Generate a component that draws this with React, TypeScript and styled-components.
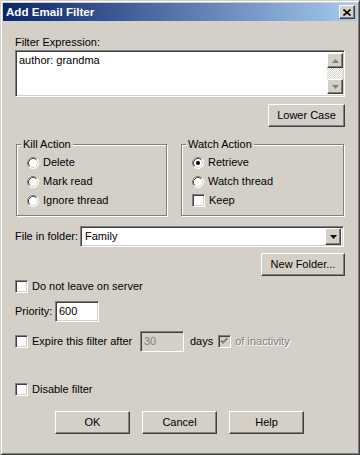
import React from 'react';
import styled, { createGlobalStyle } from 'styled-components';

const Global = createGlobalStyle`
  html, body { margin: 0; padding: 0; background: #D4D0C8; }
  body { font-family: "Liberation Sans", Arial, sans-serif; font-size: 11px; color: #000; }
  * { box-sizing: border-box; }
`;

const Window = styled.div`
  width: 360px;
  height: 455px;
  background: #D4D0C8;
  border: 1px solid;
  border-color: #D4D0C8 #404040 #404040 #D4D0C8;
  box-shadow: inset 1px 1px #fff, inset -1px -1px #808080;
  padding: 2px;
  display: flex;
  flex-direction: column;
`;

const TitleBar = styled.div`
  height: 18px;
  flex: none;
  display: flex;
  align-items: center;
  justify-content: space-between;
  padding: 0 2px 0 3px;
  background: linear-gradient(to right, #0A246A, #A6CAF0);
`;

const TitleText = styled.span`
  color: #fff;
  font-weight: bold;
  font-size: 11.6px;
  line-height: 18px;
`;

const Raised = styled.div`
  background: #D4D0C8;
  border: 1px solid;
  border-color: #fff #404040 #404040 #fff;
  box-shadow: inset -1px -1px #808080;
  display: flex;
  align-items: center;
  justify-content: center;
`;

const CloseButton = styled(Raised)`
  width: 16px;
  height: 14px;
  padding-right: 1px;
`;

const Body = styled.div`
  flex: 1;
  display: flex;
  flex-direction: column;
  padding: 15px 12px 0 12px;
`;

const Label = styled.div`
  line-height: 13px;
  height: 13px;
  white-space: nowrap;
`;

const Sunken = styled.div`
  background: #fff;
  border: 1px solid;
  border-color: #808080 #fff #fff #808080;
  box-shadow: inset 1px 1px #404040, inset -1px -1px #D4D0C8;
`;

const TextArea = styled(Sunken)`
  margin-top: 1px;
  height: 47px;
  display: flex;
  padding: 2px 1px 2px 2px;
`;

const TextContent = styled.div`
  flex: 1;
  padding: 1px 0 0 1px;
  line-height: 13px;
`;

const ScrollBar = styled.div`
  width: 16px;
  display: flex;
  flex-direction: column;
`;

const ScrollButton = styled(Raised)`
  width: 16px;
  height: 15px;
  flex: none;
`;

const ScrollTrack = styled.div`
  flex: 1;
  background: repeating-conic-gradient(#fff 0% 25%, #D4D0C8 0% 50%) 0 0 / 2px 2px;
`;

const Button = styled(Raised)<{ $w: number }>`
  width: ${(p) => p.$w}px;
  height: 23px;
  flex: none;
  line-height: 13px;
`;

const RightRow = styled.div<{ $mt: number }>`
  display: flex;
  justify-content: flex-end;
  margin-top: ${(p) => p.$mt}px;
`;

const Groups = styled.div`
  display: flex;
  gap: 14px;
  margin-top: 17px;
  padding: 0 1px;
`;

const GroupBox = styled.div<{ $w?: number }>`
  position: relative;
  ${(p) => (p.$w ? `width: ${p.$w}px;` : 'flex: 1;')}
  height: 72px;
  border: 1px solid #808080;
  box-shadow: inset 1px 1px #fff, 1px 1px #fff;
  padding: 8px 0 0 10px;
  display: flex;
  flex-direction: column;
`;

const Legend = styled.span`
  position: absolute;
  top: -7px;
  left: 4px;
  padding: 0 2px;
  background: #D4D0C8;
  line-height: 13px;
`;

const OptionRow = styled.label`
  display: flex;
  align-items: center;
  gap: 4px;
  height: 19px;
  line-height: 13px;
  white-space: nowrap;
`;

const CheckRow = styled.div<{ $mt: number }>`
  display: flex;
  align-items: center;
  gap: 4px;
  margin-top: ${(p) => p.$mt}px;
  height: 13px;
  line-height: 13px;
  white-space: nowrap;
`;

const CheckBox = styled(Sunken)<{ $disabled?: boolean }>`
  width: 13px;
  height: 13px;
  flex: none;
  display: flex;
  align-items: center;
  justify-content: center;
  background: ${(p) => (p.$disabled ? '#D4D0C8' : '#fff')};
`;

const RadioSvg = styled.svg`
  flex: none;
  display: block;
`;

const FolderRow = styled.div`
  display: flex;
  align-items: center;
  margin-top: 10px;
  padding-right: 1px;
`;

const FieldLabel = styled.span<{ $w: number }>`
  width: ${(p) => p.$w}px;
  flex: none;
  line-height: 13px;
  white-space: nowrap;
`;

const Combo = styled(Sunken)`
  flex: 1;
  height: 21px;
  display: flex;
  align-items: center;
  padding: 2px;
`;

const ComboValue = styled.span`
  flex: 1;
  padding-left: 2px;
  line-height: 13px;
`;

const ComboArrow = styled(Raised)`
  width: 16px;
  height: 17px;
`;

const FieldRow = styled.div<{ $mt: number }>`
  display: flex;
  align-items: center;
  margin-top: ${(p) => p.$mt}px;
  white-space: nowrap;
  line-height: 13px;
`;

const Input = styled(Sunken)<{ $disabled?: boolean }>`
  width: 44px;
  height: 21px;
  flex: none;
  padding: 3px 0 0 3px;
  line-height: 13px;
  background: ${(p) => (p.$disabled ? '#D4D0C8' : '#fff')};
  color: ${(p) => (p.$disabled ? '#808080' : '#000')};
`;

const Gap = styled.span<{ $w: number }>`
  width: ${(p) => p.$w}px;
  flex: none;
`;

const Disabled = styled.span`
  color: #808080;
  text-shadow: 1px 1px #fff;
`;

const ButtonBar = styled.div`
  display: flex;
  justify-content: center;
  gap: 12px;
  margin-top: 15px;
  padding-right: 1px;
`;

const Radio = ({ checked }: { checked?: boolean }) => (
  <RadioSvg width={12} height={12} viewBox="0 0 12 12">
    <circle cx="6" cy="6" r="5.5" fill="#fff" />
    <path d="M2.11 9.89 A5.5 5.5 0 0 1 9.89 2.11" stroke="#808080" fill="none" />
    <path d="M9.89 2.11 A5.5 5.5 0 0 1 2.11 9.89" stroke="#fff" fill="none" />
    <path d="M2.82 9.18 A4.5 4.5 0 0 1 9.18 2.82" stroke="#404040" fill="none" />
    <path d="M9.18 2.82 A4.5 4.5 0 0 1 2.82 9.18" stroke="#D4D0C8" fill="none" />
    {checked && <circle cx="6" cy="6" r="2" fill="#000" />}
  </RadioSvg>
);

const Check = ({ checked, disabled }: { checked?: boolean; disabled?: boolean }) => (
  <CheckBox $disabled={disabled}>
    {checked && (
      <svg width="9" height="9" viewBox="0 0 9 9">
        <polyline
          points="1,3.5 3,5.5 7.5,1"
          fill="none"
          stroke={disabled ? '#808080' : '#000'}
          strokeWidth="2"
        />
      </svg>
    )}
  </CheckBox>
);

const Arrow = ({ up, color }: { up?: boolean; color: string }) => (
  <svg width="7" height="4" viewBox="0 0 7 4">
    <polygon points={up ? '0,4 7,4 3.5,0' : '0,0 7,0 3.5,4'} fill={color} />
  </svg>
);

export default function App() {
  return (
    <>
      <Global />
      <Window>
        <TitleBar>
          <TitleText>Add Email Filter</TitleText>
          <CloseButton>
            <svg width="8" height="7" viewBox="0 0 8 7">
              <path d="M0.5 0.5 L7.5 6.5 M7.5 0.5 L0.5 6.5" stroke="#000" strokeWidth="1.6" />
            </svg>
          </CloseButton>
        </TitleBar>
        <Body>
          <Label>Filter Expression:</Label>
          <TextArea>
            <TextContent>author: grandma</TextContent>
            <ScrollBar>
              <ScrollButton>
                <Arrow up color="#808080" />
              </ScrollButton>
              <ScrollTrack />
              <ScrollButton>
                <Arrow color="#808080" />
              </ScrollButton>
            </ScrollBar>
          </TextArea>
          <RightRow $mt={7}>
            <Button $w={77}>Lower Case</Button>
          </RightRow>
          <Groups>
            <GroupBox $w={151}>
              <Legend>Kill Action</Legend>
              <OptionRow>
                <Radio />
                Delete
              </OptionRow>
              <OptionRow>
                <Radio />
                Mark read
              </OptionRow>
              <OptionRow>
                <Radio />
                Ignore thread
              </OptionRow>
            </GroupBox>
            <GroupBox>
              <Legend>Watch Action</Legend>
              <OptionRow>
                <Radio checked />
                Retrieve
              </OptionRow>
              <OptionRow>
                <Radio />
                Watch thread
              </OptionRow>
              <OptionRow>
                <Check />
                Keep
              </OptionRow>
            </GroupBox>
          </Groups>
          <FolderRow>
            <FieldLabel $w={65}>File in folder:</FieldLabel>
            <Combo>
              <ComboValue>Family</ComboValue>
              <ComboArrow>
                <Arrow color="#000" />
              </ComboArrow>
            </Combo>
          </FolderRow>
          <RightRow $mt={6}>
            <Button $w={84}>New Folder...</Button>
          </RightRow>
          <CheckRow $mt={4}>
            <Check />
            Do not leave on server
          </CheckRow>
          <FieldRow $mt={8}>
            <FieldLabel $w={40}>Priority:</FieldLabel>
            <Input>600</Input>
          </FieldRow>
          <FieldRow $mt={9}>
            <Check />
            <Gap $w={4} />
            <FieldLabel $w={108}>Expire this filter after</FieldLabel>
            <Input $disabled>30</Input>
            <Gap $w={6} />
            <span>days</span>
            <Gap $w={5} />
            <Check checked disabled />
            <Gap $w={4} />
            <Disabled>of inactivity</Disabled>
          </FieldRow>
          <CheckRow $mt={31}>
            <Check />
            Disable filter
          </CheckRow>
          <ButtonBar>
            <Button $w={75}>OK</Button>
            <Button $w={75}>Cancel</Button>
            <Button $w={75}>Help</Button>
          </ButtonBar>
        </Body>
      </Window>
    </>
  );
}
